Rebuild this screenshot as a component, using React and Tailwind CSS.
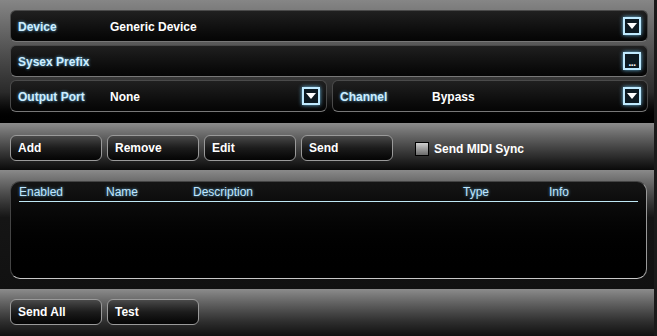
import React, { useState } from "react";

const font = { fontFamily: '"Liberation Sans", Arial, sans-serif' };

const DropIcon = ({ dots }) => (
  <div className="w-[18px] h-[18px] border-2 border-[#bfeaff] bg-[#0d1a22] flex items-center justify-center shadow-[0_0_4px_rgba(120,210,255,0.9)] shrink-0">
    {dots ? (
      <span className="text-white text-[10px] font-bold leading-none mt-[4px] tracking-[-0.5px]">...</span>
    ) : (
      <svg width="10" height="6" viewBox="0 0 10 6">
        <path d="M0 0 H10 L5 6 Z" fill="#ffffff" />
      </svg>
    )}
  </div>
);

const Field = ({ label, value, icon, className = "" }) => (
  <div
    className={`h-[32px] flex items-center rounded-[6px] border border-[#4a4a4a] border-b-[#777] bg-gradient-to-b from-[#202020] to-[#050505] pl-[7px] pr-[6px] ${className}`}
  >
    <span className="w-[92px] pt-[2px] text-[12px] font-bold text-[#cdeeff] [text-shadow:0_0_3px_rgba(110,200,255,0.9)]">
      {label}
    </span>
    <span className="flex-1 pt-[2px] text-[12px] font-bold text-white">{value}</span>
    {icon && <DropIcon dots={icon === "dots"} />}
  </div>
);

const Btn = ({ children }) => (
  <button className="w-[92px] h-[26px] rounded-[6px] border border-[#9a9a9a] bg-gradient-to-b from-[#4a4a4a] via-[#1c1c1c] to-[#050505] text-left pl-[7px] text-[12px] font-bold text-white">
    {children}
  </button>
);

export default function App() {
  const [sync, setSync] = useState(false);
  const cols = [
    { name: "Enabled", w: "w-[87px]" },
    { name: "Name", w: "w-[87px]" },
    { name: "Description", w: "w-[270px]" },
    { name: "Type", w: "w-[86px]" },
    { name: "Info", w: "flex-1" },
  ];

  return (
    <div className="w-[657px] h-[336px] flex bg-black overflow-hidden" style={font}>
      <div className="w-[654px] flex flex-col">
        {/* Device settings */}
        <div className="h-[123px] bg-gradient-to-b from-[#868686] via-[#2a2a2a] via-75% to-black pt-[10px] px-[10px] flex flex-col gap-[3px]">
          <Field label="Device" value="Generic Device" icon="drop" className="w-[638px]" />
          <Field label="Sysex Prefix" value="" icon="dots" className="w-[638px]" />
          <div className="flex gap-[5px] w-[638px]">
            <Field label="Output Port" value="None" icon="drop" className="w-[317px]" />
            <Field label="Channel" value="Bypass" icon="drop" className="w-[316px]" />
          </div>
        </div>

        {/* Toolbar */}
        <div className="h-[47px] bg-gradient-to-b from-[#8c8c8c] via-[#2e2e2e] via-70% to-[#0a0a0a] pt-[12px] px-[10px] flex items-start gap-[5px]">
          <Btn>Add</Btn>
          <Btn>Remove</Btn>
          <Btn>Edit</Btn>
          <Btn>Send</Btn>
          <label className="flex items-center gap-[5px] ml-[17px] mt-[5px] cursor-pointer">
            <input
              type="checkbox"
              checked={sync}
              onChange={() => setSync(!sync)}
              className="appearance-none w-[14px] h-[14px] border border-black bg-gradient-to-b from-[#d0d0d0] to-[#6a6a6a]"
            />
            <span className="text-[12px] font-bold text-white">Send MIDI Sync</span>
          </label>
        </div>

        {/* List */}
        <div className="h-[119px] bg-gradient-to-b from-[#8a8a8a] via-[#151515] via-40% to-[#111] pt-[11px] px-[10px]">
          <div className="w-[637px] h-[98px] rounded-[10px] border border-[#444] border-r-[#999] border-b-[#c8c8c8] bg-gradient-to-b from-[#151515] to-black px-[8px] pt-[3px]">
            <div className="flex border-b border-[#bfe8f5] leading-[15px] pb-[1px]">
              {cols.map((c) => (
                <span
                  key={c.name}
                  className={`${c.w} text-[12px] text-[#bfe6ff] [text-shadow:0_0_3px_rgba(110,200,255,0.8)]`}
                >
                  {c.name}
                </span>
              ))}
            </div>
          </div>
        </div>

        {/* Bottom bar */}
        <div className="flex-1 bg-gradient-to-b from-[#8c8c8c] via-[#2e2e2e] via-70% to-[#111] pt-[10px] px-[10px] flex items-start gap-[5px]">
          <Btn>Send All</Btn>
          <Btn>Test</Btn>
        </div>
      </div>
      <div className="w-[3px] bg-[#1a1a1a]" />
    </div>
  );
}
